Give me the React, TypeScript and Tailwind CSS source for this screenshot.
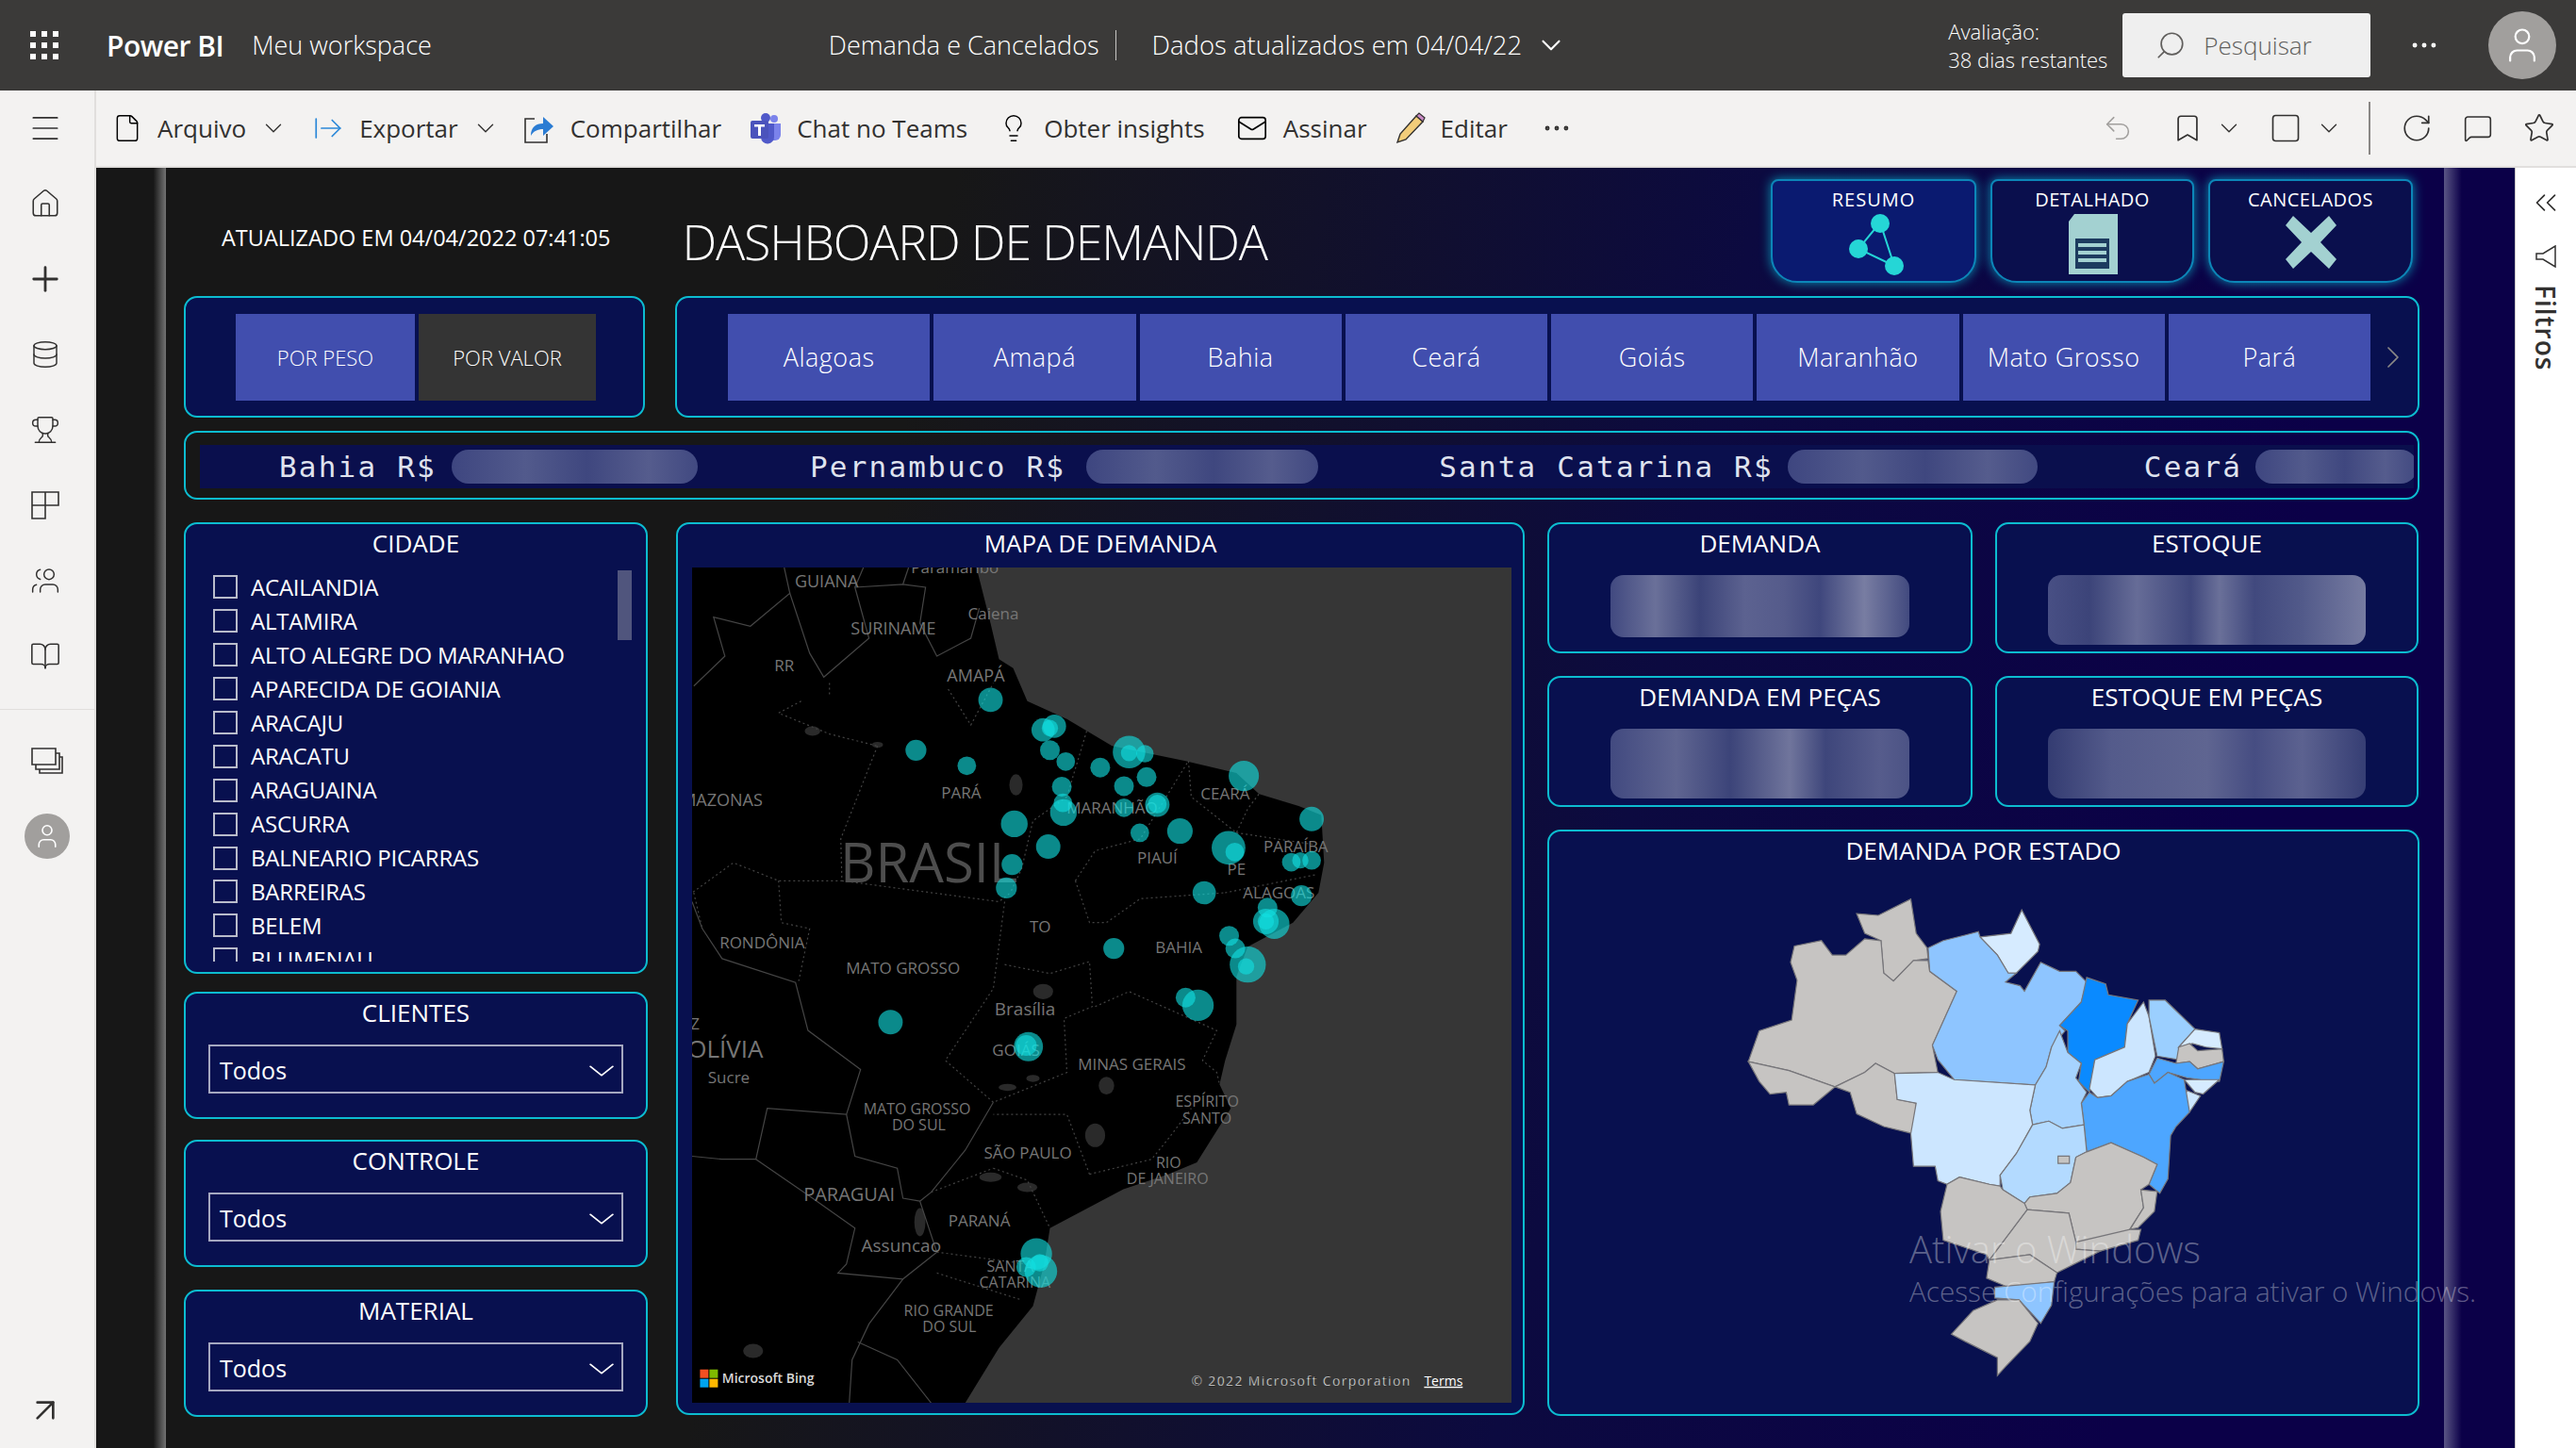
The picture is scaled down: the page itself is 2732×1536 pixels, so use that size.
import {
  ArrowRightFromLine,
  ArrowUpRight,
  Bookmark,
  BookOpen,
  ChevronDown,
  ChevronRight,
  ChevronsLeft,
  Database,
  File,
  Home,
  Lightbulb,
  Mail,
  Menu,
  MessageSquare,
  MoreHorizontal,
  Plus,
  RotateCw,
  Search,
  Square,
  Star,
  Trophy,
  Undo2,
  User,
  Users,
} from "lucide-react";

const cities = [
  "ACAILANDIA",
  "ALTAMIRA",
  "ALTO ALEGRE DO MARANHAO",
  "APARECIDA DE GOIANIA",
  "ARACAJU",
  "ARACATU",
  "ARAGUAINA",
  "ASCURRA",
  "BALNEARIO PICARRAS",
  "BARREIRAS",
  "BELEM",
  "BLUMENAU",
];

const states = ["Alagoas", "Amapá", "Bahia", "Ceará", "Goiás", "Maranhão", "Mato Grosso", "Pará"];

// bubbles and labels are measured on the map crop, mx/my turn them into map pixels
const mx = (x: number) => (x - 57) / 1.668;
const my = (y: number) => (y - 97) / 1.574;

const bubbles: [number, number, number][] = [
  [585, 318, 21], [453, 402, 18], [543, 428, 16], [678, 368, 20], [698, 362, 20], [690, 365, 14],
  [690, 402, 17], [718, 421, 16], [779, 431, 17], [830, 405, 28], [830, 407, 14], [858, 408, 15],
  [861, 447, 17], [821, 462, 17], [711, 463, 17], [713, 490, 16], [714, 506, 23], [821, 498, 16],
  [880, 493, 21], [880, 492, 16], [627, 525, 23], [687, 563, 21], [849, 540, 16], [920, 537, 22],
  [1033, 445, 26], [1153, 517, 21], [1006, 565, 29], [1017, 572, 16], [1117, 589, 16], [1133, 586, 14],
  [1153, 586, 16], [623, 593, 18], [613, 632, 18], [963, 640, 20], [1135, 645, 18], [1075, 665, 17],
  [1087, 692, 26], [1072, 688, 22], [1072, 688, 14], [1007, 712, 17], [1018, 733, 17], [1040, 760, 31],
  [1037, 763, 14], [803, 733, 18], [930, 815, 17], [952, 828, 27], [408, 856, 21], [652, 897, 25],
  [648, 895, 18], [666, 1243, 27], [672, 1258, 15], [674, 1272, 28], [648, 1265, 17],
];

const mapLabels: [string, number, number, number?][] = [
  ["Paramaribo", 522, 107, 17], ["GUIANA", 295, 130, 18], ["SURINAME", 413, 208, 18], ["Caiena", 590, 184, 17], ["RR", 220, 270, 17],
  ["AMAPÁ", 559, 288, 18], ["AMAZONAS", 100, 495, 18], ["PARÁ", 533, 483, 17], ["MARANHÃO", 800, 508, 17], ["CEARÁ", 1000, 484, 17],
  ["PARAÍBA", 1125, 573, 17], ["PIAUÍ", 880, 591, 17], ["PE", 1020, 610, 17], ["ALAGOAS", 1095, 650, 17], ["TO", 673, 706, 17],
  ["RONDÔNIA", 181, 733, 17], ["BAHIA", 918, 740, 17], ["MATO GROSSO", 430, 776, 17], ["Brasília", 646, 844, 19], ["Z", 62, 868, 17],
  ["BOLÍVIA", 102, 915, 26], ["Sucre", 122, 958, 17], ["GOIÁS", 630, 912, 17], ["MINAS GERAIS", 835, 936, 17], ["ESPÍRITO", 968, 998, 16],
  ["SANTO", 968, 1025, 16], ["MATO GROSSO", 455, 1010, 16], ["DO SUL", 458, 1037, 16], ["SÃO PAULO", 651, 1084, 17], ["RIO", 900, 1099, 16],
  ["DE JANEIRO", 898, 1126, 16], ["PARAGUAI", 335, 1154, 20], ["PARANÁ", 565, 1197, 17], ["Assuncao", 427, 1239, 19],
  ["SANTA", 620, 1272, 16], ["CATARINA", 628, 1299, 16], ["RIO GRANDE", 511, 1346, 16], ["DO SUL", 512, 1373, 16],
];

const land = [
  [57, 97], [560, 97], [585, 190], [600, 250], [625, 265], [650, 320], [720, 350], [800, 395], [930, 420], [1020, 440],
  [1060, 475], [1130, 495], [1170, 510], [1175, 590], [1165, 640], [1120, 690], [1040, 730], [1020, 780], [1020, 860],
  [1000, 920], [990, 960], [1010, 1000], [950, 1090], [900, 1110], [820, 1135], [690, 1200], [680, 1260], [660, 1330],
  [600, 1400], [540, 1492], [57, 1492],
];

const borders = [
  [[60, 295], [115, 245], [95, 180], [160, 195], [230, 140], [265, 240], [290, 280], [370, 215], [345, 130], [430, 125], [470, 130], [460, 190], [490, 245], [550, 215], [565, 165]],
  [[220, 97], [230, 140]], [[345, 130], [360, 97]], [[430, 125], [440, 97]],
  [[57, 655], [75, 700], [110, 750], [240, 790], [262, 870], [355, 935], [330, 1010], [190, 1000], [170, 1085], [110, 1085], [57, 1080]],
  [[170, 1085], [270, 1150], [345, 1200], [330, 1260], [315, 1275], [430, 1285], [490, 1240], [460, 1155], [480, 1140], [540, 1070], [590, 990]],
  [[330, 1010], [345, 1080], [420, 1100], [430, 1150], [460, 1155]],
  [[430, 1285], [370, 1360], [340, 1420], [335, 1492]], [[350, 1390], [420, 1420], [480, 1492]],
];

const dashed = [
  [[385, 395], [320, 550], [322, 620], [210, 620], [130, 590], [57, 640]], [[210, 620], [215, 690], [265, 700], [245, 790]],
  [[322, 620], [600, 655], [620, 640]], [[610, 655], [590, 800], [505, 920], [590, 990]], [[720, 480], [660, 520], [640, 600], [620, 640]],
  [[755, 370], [720, 480]], [[610, 760], [690, 775], [760, 755], [765, 830], [715, 850], [720, 940], [655, 965], [590, 990]],
  [[735, 620], [770, 570], [850, 550], [935, 420]], [[735, 620], [760, 690], [790, 690], [850, 650], [1000, 640]],
  [[770, 830], [830, 805], [985, 870], [960, 920], [985, 940], [990, 960]], [[935, 420], [940, 480], [1020, 540], [1040, 500], [1060, 475]],
  [[1020, 540], [1160, 560]], [[1000, 640], [1160, 610]], [[760, 1110], [870, 1085], [900, 1050], [940, 1000]],
  [[760, 1110], [720, 1010], [590, 1010]], [[590, 1100], [650, 1120], [690, 1200]], [[480, 1140], [590, 1100]],
  [[490, 1240], [650, 1260]], [[490, 1275], [640, 1320]], [[250, 320], [210, 340], [300, 375], [385, 395]], [[300, 290], [300, 310]],
  [[510, 300], [550, 360], [590, 290]], [[60, 640], [75, 700]],
];

const blobs = [
  [270, 370, 14, 8], [385, 393, 10, 5], [630, 460, 12, 18], [678, 805, 18, 13], [790, 962, 14, 15], [770, 1045, 18, 20],
  [660, 950, 12, 6], [615, 965, 16, 6], [585, 1115, 20, 8], [650, 1132, 18, 8], [460, 1190, 10, 24], [165, 1405, 18, 12],
];

const toPath = (pts: number[][]) => pts.map((p, i) => `${i ? "L" : "M"}${mx(p[0]).toFixed(1)} ${my(p[1]).toFixed(1)}`).join(" ");

const brazilStates: [string, string][] = [
  ["#c6c4c2", "330,185 370,190 430,145 440,240 460,280 462,310 435,315 398,372 380,350 375,260 345,240"],
  ["#c6c4c2", "215,275 265,260 285,300 310,300 345,255 375,260 380,350 398,372 435,315 462,315 465,345 515,400 470,550 480,625 400,628 365,600 345,625 290,665 205,620 130,595 150,510 210,480 220,370 208,320"],
  ["#c6c4c2", "130,595 205,620 290,665 250,715 205,715 200,680 170,685 150,650"],
  ["#c6c4c2", "290,665 345,625 365,600 400,628 405,700 440,710 435,795 380,775 330,740 318,680"],
  ["#d6ebff", "558,250 615,240 635,175 668,270 665,290 625,350 610,350 590,300"],
  ["#8ec5ff", "462,280 490,260 530,245 555,235 558,250 590,300 610,350 625,350 605,375 632,385 640,400 670,320 705,345 735,345 755,375 745,430 705,495 715,510 690,555 680,610 660,660 510,645 480,590 470,550 515,400 465,345"],
  ["#0a8aff", "755,362 790,380 795,410 850,425 830,490 825,555 770,590 760,680 740,650 745,600 720,570 720,510 705,495 745,430"],
  ["#cce6ff", "860,430 870,470 882,580 870,625 830,650 800,690 775,695 760,670 770,590 825,555 830,490"],
  ["#9bcfff", "870,425 900,425 955,505 925,555 925,590 885,580 870,470"],
  ["#d6ebff", "955,505 1000,515 1005,560 975,555 950,545 925,555"],
  ["#c6c4c2", "925,555 945,545 960,565 1005,560 1008,595 960,615 945,595 920,600"],
  ["#4da6ff", "885,585 920,600 945,595 960,615 1008,595 1000,650 965,645 940,640 905,625 880,655 870,630"],
  ["#d6ebff", "935,645 1000,645 970,685 955,680"],
  ["#cce6ff", "940,675 965,690 945,735 930,715"],
  ["#4da6ff", "800,690 830,650 870,630 880,655 905,625 935,645 945,735 920,775 910,800 905,920 890,960 870,935 885,880 860,860 800,820 755,845 750,770 745,710 760,680 775,695"],
  ["#a6d3ff", "705,510 720,570 745,600 735,640 755,680 745,710 750,770 710,780 685,760 655,770 650,730 660,660 680,610 690,555"],
  ["#cce6ff", "400,628 480,625 510,645 660,660 650,730 655,770 625,850 595,910 595,940 575,935 520,915 497,935 480,925 475,885 435,885 430,795 440,710 405,700"],
  ["#b3daff", "655,770 685,760 710,780 750,770 755,845 735,860 725,930 700,960 650,970 640,988 600,950 595,910 625,850"],
  ["#c6c4c2", "702,857 723,857 723,877 702,877"],
  ["#c6c4c2", "755,845 800,820 860,860 885,880 870,935 855,950 860,1000 830,1070 735,1095 722,1015 645,1005 640,988 650,970 700,960 725,930 735,860"],
  ["#c6c4c2", "855,950 885,955 880,1010 850,1055 835,1060 860,1000"],
  ["#c6c4c2", "835,1060 855,1060 850,1090 780,1120 735,1115 735,1095"],
  ["#c6c4c2", "645,1005 722,1015 735,1095 735,1115 780,1120 700,1180 650,1130 575,1145 605,1085"],
  ["#c6c4c2", "497,935 520,915 575,935 595,940 600,950 640,988 645,1005 605,1085 575,1145 570,1130 490,1090 485,1010"],
  ["#c6c4c2", "575,1145 650,1130 700,1180 695,1205 610,1220 570,1195"],
  ["#8ec5ff", "585,1220 695,1205 690,1270 670,1320 630,1255 585,1250"],
  ["#c6c4c2", "590,1255 630,1255 665,1320 650,1370 605,1440 590,1465 590,1415 530,1370 505,1350 545,1285"],
];

function Panel({ title, className, children }: { title?: string; className?: string; children?: React.ReactNode }) {
  return (
    <div className={`rounded-[14px] border-2 border-[#0cbcd0] bg-[#08104f] ${className ?? ""}`}>
      {title && <div className="flex h-10 items-center justify-center text-[26px] text-white">{title}</div>}
      {children}
    </div>
  );
}

function Dropdown({ title }: { title: string }) {
  return (
    <Panel title={title} className="h-[135px]">
      <div className="mx-6 mt-[14px] flex h-[52px] items-center justify-between border-2 border-[#a5a8c0] pl-[10px] pr-[2px] pt-[3px] text-[25px] text-white">
        Todos
        <ChevronDown size={38} strokeWidth={1} className="scale-x-125" />
      </div>
    </Panel>
  );
}

function Blurred({ title, className, bg }: { title: string; className: string; bg: string }) {
  return (
    <Panel title={title} className="h-[139px]">
      <div className={`mt-[14px] overflow-hidden rounded-[14px] ${className}`}>
        <div className={`h-full w-full ${bg}`} />
      </div>
    </Panel>
  );
}

function TickerValue({ className }: { className: string }) {
  return <div className={`h-9 rounded-full bg-[linear-gradient(90deg,#3e4680,#525a8c_30%,#3f477f_55%,#555c8d_80%,#414981)] ${className}`} />;
}

function ToolItem({ icon, label, chevron, className }: { icon: React.ReactNode; label: string; chevron?: boolean; className?: string }) {
  return (
    <div className={`flex items-center ${className ?? ""}`}>
      {icon}
      <span className="ml-4 text-[26px] text-[#323130]">{label}</span>
      {chevron && <ChevronDown size={30} strokeWidth={1.1} className="ml-[14px] text-[#323130]" />}
    </div>
  );
}

function NavButton({ children }: { children: React.ReactNode }) {
  return <div className="flex h-20 items-center justify-center pr-1 text-[#323130]">{children}</div>;
}

export default function App() {
  return (
    <div className="relative flex h-[1536px] w-[2732px] flex-col overflow-hidden bg-white font-['Open_Sans',sans-serif]">
      {/* top bar */}
      <header className="flex h-24 shrink-0 items-center bg-[#3b3a39] text-white">
        <svg width="30" height="30" viewBox="0 0 30 30" className="ml-8 fill-white">
          {[0, 12, 24].map((y) => [0, 12, 24].map((x) => <rect key={`${x}-${y}`} x={x} y={y} width="6" height="6" />))}
        </svg>
        <span className="ml-[51px] text-[30px] font-semibold tracking-[-0.5px]">Power BI</span>
        <span className="ml-[30px] text-[27px] font-light">Meu workspace</span>
        <span className="ml-[421px] text-[27px] font-light">Demanda e Cancelados</span>
        <div className="ml-[17px] h-8 w-px bg-[#c8c6c4]" />
        <span className="ml-[38px] text-[27.500px] font-light">Dados atualizados em 04/04/22</span>
        <ChevronDown size={34} strokeWidth={1.5} className="ml-[14px]" />
        <div className="ml-[404px] text-[22px] font-light leading-[30px]">
          <div>Avaliação:</div>
          <div>38 dias restantes</div>
        </div>
        <div className="ml-4 flex h-[68px] w-[263px] items-center rounded-[3px] bg-[#efefef] pl-[34px] text-[26px] text-[#605e5c]">
          <Search size={34} strokeWidth={1.2} className="-scale-x-100" />
          <span className="ml-[18px] font-light">Pesquisar</span>
        </div>
        <MoreHorizontal size={34} strokeWidth={1.5} className="ml-[40px]" />
        <div className="ml-[51px] flex h-[72px] w-[72px] items-center justify-center rounded-full bg-[#a19f9d]">
          <User size={44} strokeWidth={1.2} />
        </div>
      </header>

      <div className="flex min-h-0 flex-1">
        {/* left nav */}
        <nav className="flex w-[102px] shrink-0 flex-col border-r-2 border-[#e1dfdd] bg-[#f3f2f1]">
          <div className="flex h-20 items-center justify-center pr-1 text-[#323130]"><Menu size={38} strokeWidth={1.1} /></div>
          <NavButton><Home size={34} strokeWidth={1.1} /></NavButton>
          <NavButton><Plus size={42} strokeWidth={1.6} /></NavButton>
          <NavButton><Database size={32} strokeWidth={1.1} /></NavButton>
          <NavButton><Trophy size={32} strokeWidth={1.1} /></NavButton>
          <NavButton>
            <svg width="32" height="32" viewBox="0 0 32 32" fill="none" stroke="currentColor" strokeWidth="1.6">
              <path d="M2 2h14v28H2zM2 16h14M16 2h14v14H16z" />
            </svg>
          </NavButton>
          <NavButton><Users size={32} strokeWidth={1.1} className="-scale-x-100" /></NavButton>
          <NavButton><BookOpen size={34} strokeWidth={1.1} /></NavButton>
          <div className="mt-[16px] h-px bg-[#e1dfdd]" />
          <div className="mt-[14px] flex h-20 items-center justify-center text-[#323130]">
            <svg width="34" height="28" viewBox="0 0 34 28" fill="none" stroke="currentColor" strokeWidth="1.6">
              <path d="M1 1h25v17H1zM5 18v5h25V6h-4M9 23v4h24V10h-3" />
            </svg>
          </div>
          <div className="flex h-20 items-center justify-center">
            <div className="flex h-12 w-12 items-center justify-center rounded-full bg-[#a19f9d] text-white"><User size={30} strokeWidth={1.3} /></div>
          </div>
          <div className="mt-auto flex h-20 items-center justify-center pr-1 text-[#323130]"><ArrowUpRight size={40} strokeWidth={1.6} /></div>
        </nav>

        <div className="flex min-w-0 flex-1 flex-col">
          {/* toolbar */}
          <div className="flex h-[82px] shrink-0 items-center border-b-2 border-[#e1dfdd] bg-[#f3f2f1]">
            <ToolItem className="ml-[17px]" icon={<File size={32} strokeWidth={1.1} />} label="Arquivo" chevron />
            <ToolItem className="ml-[26px]" icon={<ArrowRightFromLine size={34} strokeWidth={1.2} className="text-[#2b88d8]" />} label="Exportar" chevron />
            <ToolItem
              className="ml-[25px]"
              icon={
                <svg width="34" height="34" viewBox="0 0 34 34" fill="none">
                  <path d="M12 7H2v25h23v-9" stroke="#323130" strokeWidth="1.6" />
                  <path d="M8 25c0-9 5-13 13-13V5l11 10-11 10v-7c-6 0-10 2-13 7z" fill="#2b7cd3" />
                </svg>
              }
              label="Compartilhar"
            />
            <ToolItem
              className="ml-[30px]"
              icon={
                <svg width="34" height="34" viewBox="0 0 34 34">
                  <circle cx="26" cy="7" r="4" fill="#7b83eb" />
                  <circle cx="17" cy="6" r="5" fill="#5059c9" />
                  <path d="M20 12h13v12a6 6 0 0 1-6 6h-7z" fill="#7b83eb" />
                  <path d="M9 12h17v14a7 7 0 0 1-14 1z" fill="#5059c9" />
                  <rect x="1" y="9" width="19" height="19" rx="2" fill="#4b53bc" />
                  <path d="M5 13h11v2.500h-4V25H9v-9.500H5z" fill="#fff" />
                </svg>
              }
              label="Chat no Teams"
            />
            <ToolItem className="ml-[33px]" icon={<Lightbulb size={32} strokeWidth={1.1} />} label="Obter insights" />
            <ToolItem className="ml-[33px]" icon={<Mail size={34} strokeWidth={1.2} />} label="Assinar" />
            <ToolItem
              className="ml-[30px]"
              icon={
                <svg width="32" height="34" viewBox="0 0 32 34">
                  <path d="M22 4l7 6L11 29l-9 3 3-9z" fill="#f2cd7a" stroke="#323130" strokeWidth="1.4" />
                  <path d="M22 4l3-3 6 5-2 4z" fill="#c88ac4" stroke="#323130" strokeWidth="1.2" />
                </svg>
              }
              label="Editar"
            />
            <MoreHorizontal size={34} strokeWidth={1.4} className="ml-[35px] text-[#323130]" />

            <div className="ml-auto flex items-center text-[#323130]">
              <Undo2 size={34} strokeWidth={1.1} className="text-[#a19f9d]" />
              <Bookmark size={34} strokeWidth={1.2} className="ml-[40px]" />
              <ChevronDown size={30} strokeWidth={1.1} className="ml-3" />
              <Square size={36} strokeWidth={1.1} className="ml-[27px]" />
              <ChevronDown size={30} strokeWidth={1.1} className="ml-[13px]" />
              <div className="ml-[27px] h-[56px] w-[2px] bg-[#8a8886]" />
              <RotateCw size={34} strokeWidth={1.2} className="ml-8" />
              <MessageSquare size={32} strokeWidth={1.2} className="ml-8" />
              <Star size={34} strokeWidth={1.2} className="ml-8 mr-[22px]" />
            </div>
          </div>

          <div className="flex min-h-0 flex-1">
            {/* report canvas */}
            <div className="flex min-w-0 flex-1 bg-[linear-gradient(102deg,#171717_32%,#0c0a40_62%,#0b0048_85%)]">
              <div className="w-[74px] shrink-0 bg-[linear-gradient(90deg,transparent_82%,#737373_100%)]" />

              <div className="w-[2416px] shrink-0 pl-[19px] pr-[26px]">
                {/* header */}
                <div className="flex h-[136px] items-center">
                  <span className="ml-10 mt-[14px] text-[23.500px] text-white">ATUALIZADO EM 04/04/2022 07:41:05</span>
                  <span className="ml-[76px] mt-5 text-[52px] font-light tracking-[-1.200px] text-white">DASHBOARD DE DEMANDA</span>
                  <div className="ml-auto flex gap-[15px] self-start pt-3 pr-[7px]">
                    <div className="flex h-[110px] w-[218px] flex-col items-center rounded-b-[28px] rounded-t-lg border-2 border-[#0c86b8] bg-[#0a1a70] shadow-[0_0_12px_#0a8fb0]">
                      <span className="mt-[5px] text-[20px] tracking-[1px] text-white">RESUMO</span>
                      <svg width="62" height="66" viewBox="0 0 62 66" className="ml-2">
                        <path d="M34 9L11 37l38 18z" fill="none" stroke="#25d6d6" strokeWidth="2" />
                        <circle cx="34" cy="10" r="10" fill="#25d6d6" />
                        <circle cx="11" cy="37" r="10" fill="#25d6d6" />
                        <circle cx="49" cy="55" r="10" fill="#25d6d6" />
                      </svg>
                    </div>
                    <div className="flex h-[110px] w-[216px] flex-col items-center rounded-b-[28px] rounded-t-lg border-2 border-[#0c86b8] bg-[#0a0f4d] shadow-[0_0_12px_#0a8fb0]">
                      <span className="mt-[5px] text-[20px] tracking-[0.500px] text-white">DETALHADO</span>
                      <svg width="54" height="64" viewBox="0 0 54 64">
                        <path d="M8 0h46v64H2V8z" fill="#a3d1d1" />
                        <path d="M9 26h36v32H9z" fill="#1d3b5f" />
                        <path d="M12 31h30v4H12zM12 39h30v4H12zM12 47h30v4H12z" fill="#a3d1d1" />
                      </svg>
                    </div>
                    <div className="flex h-[110px] w-[217px] flex-col items-center rounded-b-[28px] rounded-t-lg border-2 border-[#0c86b8] bg-[#0a0f4d] shadow-[0_0_12px_#0a8fb0]">
                      <span className="mt-[5px] text-[20px] tracking-[0.500px] text-white">CANCELADOS</span>
                      <svg width="54" height="56" viewBox="0 0 54 56" className="mt-[2px]">
                        <path d="M8 0l19 18L46 0l8 10-17 18 17 18-8 10-19-18L8 56 0 46l17-18L0 10z" fill="#a3d1d1" />
                      </svg>
                    </div>
                  </div>
                </div>

                {/* slicers */}
                <div className="flex h-[129px] gap-8">
                  <Panel className="flex h-full w-[489px] items-center pl-[53px]">
                    <div className="flex h-[92px] w-[190px] items-center justify-center bg-[#414eae] pt-[2px] text-[22px] font-light text-white">POR PESO</div>
                    <div className="ml-1 flex h-[92px] w-[188px] items-center justify-center bg-[#343434] pt-[2px] text-[22px] font-light text-white">POR VALOR</div>
                  </Panel>
                  <Panel className="flex h-full w-[1850px] items-center pl-[54px]">
                    <div className="grid h-[92px] w-[1742px] grid-cols-8 gap-1">
                      {states.map((s) => (
                        <div key={s} className="flex items-center justify-center bg-[#414eae] pt-[2px] text-[27px] font-light tracking-[0.500px] text-white">{s}</div>
                      ))}
                    </div>
                    <ChevronRight size={40} strokeWidth={1} className="ml-[4px] text-[#8a8886]" />
                  </Panel>
                </div>

                {/* ticker */}
                <div className="mt-[14px] h-[73px] rounded-[14px] border-2 border-[#0cbcd0] pb-2 pl-[15px] pr-1 pt-[13px]">
                  <div className="flex h-[46px] items-center overflow-hidden bg-[#0a0f4d] font-['DejaVu_Sans_Mono',monospace] text-[31px] tracking-[2.200px] text-[#dfe2ee]">
                    <span className="ml-[84px] shrink-0">Bahia R$</span>
                    <TickerValue className="ml-4 w-[261px] shrink-0" />
                    <span className="ml-[119px] shrink-0">Pernambuco R$</span>
                    <TickerValue className="ml-[22px] w-[246px] shrink-0" />
                    <span className="ml-[128px] shrink-0">Santa Catarina R$</span>
                    <TickerValue className="ml-[15px] w-[265px] shrink-0" />
                    <span className="ml-[113px] shrink-0">Ceará</span>
                    <TickerValue className="ml-[14px] w-[172px] shrink-0" />
                  </div>
                </div>

                {/* main area */}
                <div className="mt-6 flex">
                  <div className="mr-[30px] flex w-[492px] shrink-0 flex-col">
                    <Panel title="CIDADE" className="h-[479px]">
                      <div className="relative ml-[29px] mt-[9px] h-[415px] overflow-hidden">
                        {cities.map((c) => (
                          <div key={c} className="flex h-[35.900px] items-center gap-[14px] text-[24px] tracking-[-0.200px] text-white">
                            <div className="h-[25px] w-[26px] shrink-0 border-2 border-[#b9bccb]" />
                            {c}
                          </div>
                        ))}
                        <div className="absolute right-[15px] top-[-4px] h-[78px] w-[15px] bg-[#50557d]" />
                      </div>
                    </Panel>
                    <div className="mt-[19px]"><Dropdown title="CLIENTES" /></div>
                    <div className="mt-[22px]"><Dropdown title="CONTROLE" /></div>
                    <div className="mt-6"><Dropdown title="MATERIAL" /></div>
                  </div>

                  <Panel title="MAPA DE DEMANDA" className="mr-6 h-[947px] w-[900px] shrink-0">
                    <div className="mx-[15px] mt-[6px] h-[886px] w-[869px]">
                      <svg width="869" height="886" viewBox="0 0 869 886" className="block bg-[#363636]">
                        <path d={toPath(land) + " Z"} fill="#000" />
                        {blobs.map(([x, y, rx, ry]) => (
                          <ellipse key={`${x}-${y}`} cx={mx(x)} cy={my(y)} rx={rx / 1.7} ry={ry / 1.6} fill="#2a2a2a" />
                        ))}
                        {borders.map((b, i) => (
                          <path key={i} d={toPath(b)} fill="none" stroke="#454545" strokeWidth="1.2" />
                        ))}
                        {dashed.map((b, i) => (
                          <path key={i} d={toPath(b)} fill="none" stroke="#434343" strokeWidth="1.2" strokeDasharray="2 3" />
                        ))}
                        <text x={mx(476)} y={my(622)} textAnchor="middle" className="fill-[#4d4d4d] text-[58px]">BRASIL</text>
                        {mapLabels.map(([t, x, y, size]) => (
                          <text key={`${t}-${x}`} x={mx(x)} y={my(y)} textAnchor="middle" fill="#767676" fontSize={size ?? 15}>{t}</text>
                        ))}
                        {bubbles.map(([x, y, r]) => (
                          <circle key={`${x}-${y}-${r}`} cx={mx(x)} cy={my(y)} r={r / 1.62} fill="#12dfe0" opacity="0.62" />
                        ))}
                        <g transform={`translate(${mx(71)} ${my(1436)})`}>
                          <rect width="9" height="9" fill="#f25022" />
                          <rect x="10" width="9" height="9" fill="#7fba00" />
                          <rect y="10" width="9" height="9" fill="#00a4ef" />
                          <rect x="10" y="10" width="9" height="9" fill="#ffb900" />
                        </g>
                        <text x={mx(110)} y={my(1458)} fill="#d8d8d8" fontSize="14" fontWeight="600">Microsoft Bing</text>
                        <text x={mx(940)} y={my(1463)} fill="#fff" fontSize="14" textLength="232" stroke="#000" strokeWidth="0.3">© 2022 Microsoft Corporation</text>
                        <text x={mx(1352)} y={my(1463)} fill="#fff" fontSize="14" textDecoration="underline">Terms</text>
                      </svg>
                    </div>
                  </Panel>

                  <div className="w-[924px] shrink-0">
                    <div className="grid grid-cols-[451px_449px] gap-x-6 gap-y-[24px]">
                      <Blurred title="DEMANDA" className="mx-[65px] h-[66px]" bg="bg-[linear-gradient(90deg,#414980,#6a7099_15%,#3b4378_30%,#5c6290_45%,#555b8b_58%,#3f477d_70%,#787da2_85%,#424a7f)]" />
                      <Blurred title="ESTOQUE" className="mx-[54px] h-[74px]" bg="bg-[linear-gradient(90deg,#484f84,#3c4479_13%,#666c97_28%,#3f477c_45%,#6a7099_54%,#41497e_65%,#525a8a_80%,#777ca1)]" />
                      <Blurred title="DEMANDA EM PEÇAS" className="mx-[65px] h-[74px]" bg="bg-[linear-gradient(90deg,#424a80,#5f6591_22%,#3c4479_40%,#70759c_60%,#3e467b_72%,#565c8c_90%,#4c5385)]" />
                      <Blurred title="ESTOQUE EM PEÇAS" className="mx-[54px] h-[74px]" bg="bg-[linear-gradient(90deg,#343c72,#545b8b_20%,#5f6591_50%,#464d82_65%,#5c6290_80%,#363e74)]" />
                    </div>
                    <Panel title="DEMANDA POR ESTADO" className="mt-[24px] h-[622px] w-[925px]">
                      <svg width="534" height="517" viewBox="100 130 930 1350" preserveAspectRatio="none" className="ml-[194px] mt-[26px]">
                        {brazilStates.map(([fill, pts], i) => (
                          <polygon key={i} points={pts} fill={fill} stroke="#77767a" strokeWidth="1.2" vectorEffect="non-scaling-stroke" />
                        ))}
                      </svg>
                    </Panel>
                  </div>
                </div>
              </div>

              <div className="min-w-0 flex-1 bg-[linear-gradient(90deg,#5a5585,transparent_25%)]" />
            </div>

            {/* filters pane */}
            <aside className="flex w-[65px] shrink-0 flex-col items-center border-l border-[#c8c6c4] bg-white text-[#323130]">
              <ChevronsLeft size={38} strokeWidth={1.1} className="mt-[18px]" />
              <svg width="22" height="24" viewBox="0 0 22 24" fill="none" stroke="currentColor" strokeWidth="1.5" className="mt-[26px]">
                <path d="M21 1v22L8 15H1V9h7z" />
              </svg>
              <span className="mt-[18px] text-[28px] font-semibold tracking-[1px] [writing-mode:vertical-rl]">Filtros</span>
            </aside>
          </div>
        </div>
      </div>

      {/* windows activation watermark */}
      <div className="pointer-events-none absolute left-[2025px] top-[1300px] font-light text-white/35">
        <div className="text-[40px] leading-[50px]">Ativar o Windows</div>
        <div className="text-[29.700px] leading-[40px]">Acesse Configurações para ativar o Windows.</div>
      </div>
    </div>
  );
}
